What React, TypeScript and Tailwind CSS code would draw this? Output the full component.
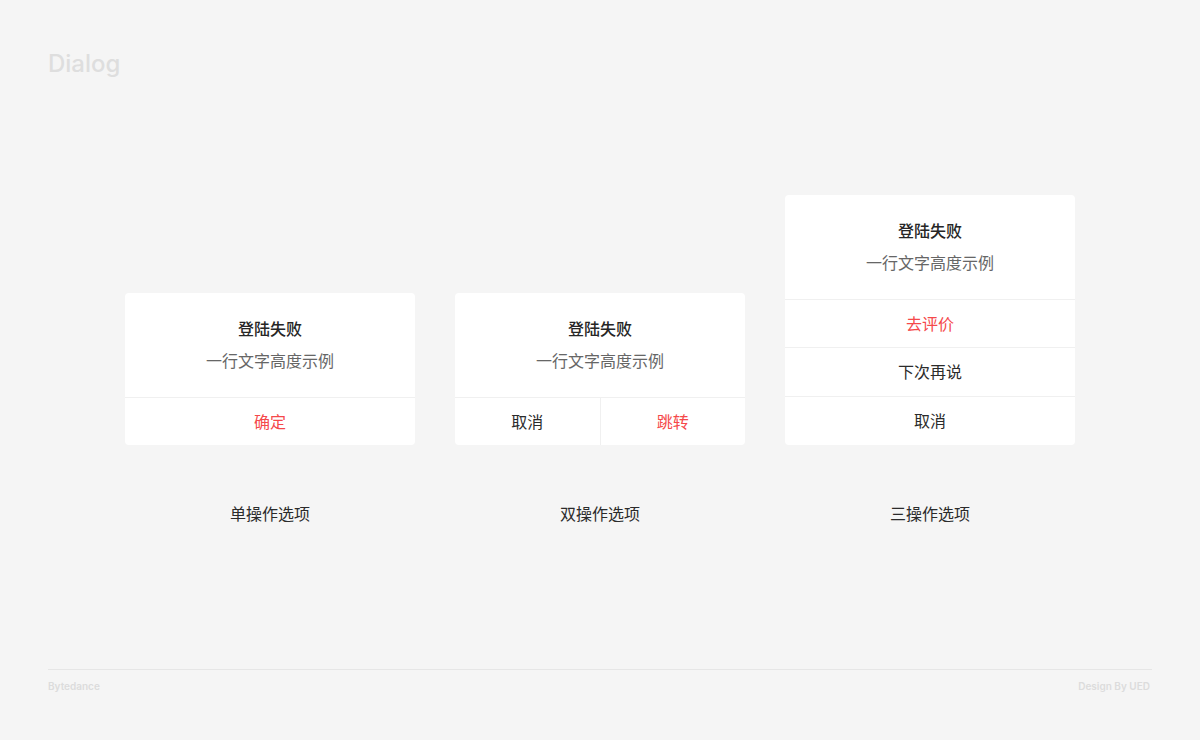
import React from 'react';

const FONT = { fontFamily: 'Inter, "Noto Sans CJK SC", "Noto Sans", sans-serif' };

const Head: React.FC = () => (
    <div className="flex flex-col items-center pt-[24px] pb-[24px]">
        <div className="text-[16px] leading-[24px] font-medium text-[#262626]">登陆失败</div>
        <div className="text-[16px] leading-[24px] mt-[8px] text-[#666]">一行文字高度示例</div>
    </div>
);

const Row: React.FC<{ text: string; red?: boolean; tall?: boolean }> = ({ text, red, tall }) => (
    <div className={`${tall ? 'h-[49px]' : 'h-[48px]'} flex items-center justify-center border-t border-[#f0f0f0] text-[16px] ${red ? 'text-[#f5484a]' : 'text-[#2b2b2b]'}`}>
        {text}
    </div>
);

const Column: React.FC<{ label: string; children: React.ReactNode }> = ({ label, children }) => (
    <div className="flex flex-col items-center w-[290px]">
        <div className="w-full bg-white rounded-[4px] overflow-hidden">{children}</div>
        <div className="mt-[57px] text-[16px] leading-[24px] text-[#2b2b2b]">{label}</div>
    </div>
);

export default function App() {
    return (
        <div className="h-[740px] bg-[#f5f5f5] flex flex-col px-[48px]" style={FONT}>
            {/* header */}
            <div className="pt-[48px] text-[24px] leading-[32px] font-medium text-[#dedede]">Dialog</div>

            {/* cards */}
            <div className="mt-[115px] flex justify-center gap-[40px]">
                <div className="flex flex-col justify-end">
                    <Column label="单操作选项">
                        <Head />
                        <Row text="确定" red />
                    </Column>
                </div>
                <div className="flex flex-col justify-end">
                    <Column label="双操作选项">
                        <Head />
                        <div className="h-[48px] flex border-t border-[#f0f0f0] text-[16px]">
                            <div className="flex-1 flex items-center justify-center text-[#2b2b2b] border-r border-[#f0f0f0]">取消</div>
                            <div className="flex-1 flex items-center justify-center text-[#f5484a]">跳转</div>
                        </div>
                    </Column>
                </div>
                <Column label="三操作选项">
                    <Head />
                    <Row text="去评价" red />
                    <Row text="下次再说" tall />
                    <Row text="取消" tall />
                </Column>
            </div>

            {/* footer */}
            <div className="mt-auto border-t border-[#e6e6e6] pt-[8px] pb-[46px] flex justify-between text-[10px] leading-[16px] font-semibold text-[#dcdcdc]">
                <span>Bytedance</span>
                <span className="pr-[2px]">Design By UED</span>
            </div>
        </div>
    );
}
